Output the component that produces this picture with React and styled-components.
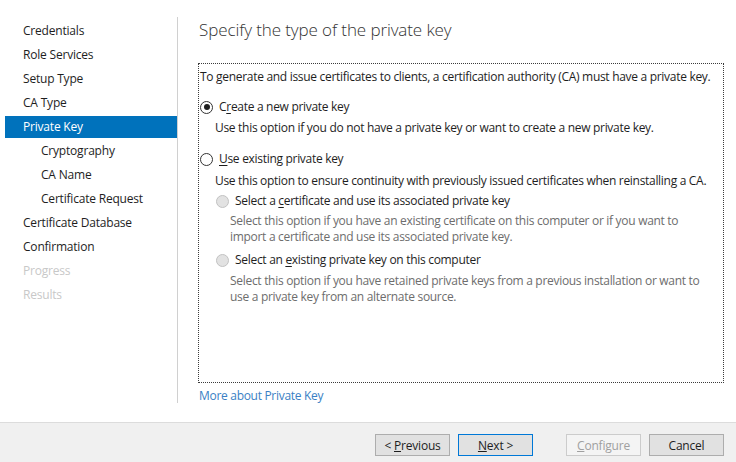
import React from 'react';
import styled, { createGlobalStyle } from 'styled-components';

const GlobalStyle = createGlobalStyle`
    html, body {
        margin: 0;
        padding: 0;
        background: #ffffff;
    }
    body {
        font-family: "Open Sans", "Noto Sans", "Liberation Sans", sans-serif;
        font-size: 12px;
        color: #1e1e1e;
    }
`;

const steps = [
    { label: 'Credentials' },
    { label: 'Role Services' },
    { label: 'Setup Type' },
    { label: 'CA Type' },
    { label: 'Private Key', active: true },
    { label: 'Cryptography', sub: true },
    { label: 'CA Name', sub: true },
    { label: 'Certificate Request', sub: true },
    { label: 'Certificate Database' },
    { label: 'Confirmation' },
    { label: 'Progress', disabled: true },
    { label: 'Results', disabled: true },
];

export default function App() {
    return (
        <Window>
            <GlobalStyle />
            <Main>
                <Sidebar>
                    <StepList>
                        {steps.map((s) => (
                            <Step key={s.label} $active={s.active} $sub={s.sub} $disabled={s.disabled}>
                                {s.label}
                            </Step>
                        ))}
                    </StepList>
                </Sidebar>
                <Content>
                    <Title>Specify the type of the private key</Title>
                    <Box>
                        <Line $mt={5}>To generate and issue certificates to clients, a certification authority (CA) must have a private key.</Line>

                        <Option $mt={14}>
                            <Radio $checked />
                            <span>C<u>r</u>eate a new private key</span>
                        </Option>
                        <Desc $mt={5} $indent={15}>Use this option if you do not have a private key or want to create a new private key.</Desc>

                        <Option $mt={15}>
                            <Radio />
                            <span><u>U</u>se existing private key</span>
                        </Option>
                        <Desc $mt={6} $indent={15}>Use this option to ensure continuity with previously issued certificates when reinstalling a CA.</Desc>

                        <Option $mt={4} $indent={16}>
                            <Radio $disabled />
                            <span>Select a <u>c</u>ertificate and use its associated private key</span>
                        </Option>
                        <Desc $mt={4} $indent={30} $muted>
                            Select this option if you have an existing certificate on this computer or if you want to<br />
                            import a certificate and use its associated private key.
                        </Desc>

                        <Option $mt={7} $indent={16}>
                            <Radio $disabled />
                            <span>Select an <u>e</u>xisting private key on this computer</span>
                        </Option>
                        <Desc $mt={5} $indent={30} $muted>
                            Select this option if you have retained private keys from a previous installation or want to<br />
                            use a private key from an alternate source.
                        </Desc>
                    </Box>
                    <MoreLink>More about Private Key</MoreLink>
                </Content>
            </Main>
            <Footer>
                <Button>&lt; <u>P</u>revious</Button>
                <Button $primary><u>N</u>ext &gt;</Button>
                <Button $disabled $gap={33}><u>C</u>onfigure</Button>
                <Button>Cancel</Button>
            </Footer>
        </Window>
    );
}

const Window = styled.div`
    width: 736px;
    height: 462px;
    display: flex;
    flex-direction: column;
    overflow: hidden;
`;

const Main = styled.div`
    flex: 1;
    display: flex;
    background: #ffffff;
`;

const Sidebar = styled.div`
    width: 172px;
    flex-shrink: 0;
    padding: 20px 0 0 5px;
    position: relative;

    &::after {
        content: '';
        position: absolute;
        right: -1px;
        top: 17px;
        height: 386px;
        width: 1px;
        background: #d0d0d0;
    }
`;

const StepList = styled.ul`
    list-style: none;
    margin: 0;
    padding: 0;
`;

const Step = styled.li`
    height: 22px;
    line-height: 22px;
    margin-bottom: 2px;
    padding-left: ${(p) => (p.$sub ? 36 : 18)}px;
    font-size: 12px;
    letter-spacing: -0.2px;
    color: ${(p) => (p.$active ? '#ffffff' : p.$disabled ? '#c8c8c8' : '#1e1e1e')};
    background: ${(p) => (p.$active ? '#0072bc' : 'transparent')};
`;

const Content = styled.div`
    flex: 1;
    padding: 17px 12px 0 22px;
    display: flex;
    flex-direction: column;
`;

const Title = styled.h1`
    margin: 0;
    font-size: 17px;
    font-weight: 300;
    line-height: 25px;
    color: #333333;
    letter-spacing: -0.1px;
`;

const Box = styled.div`
    margin-top: 21px;
    margin-left: -1px;
    height: 320px;
    box-sizing: border-box;
    border: 1px dotted #3c3c3c;
    padding: 0 0 0 1px;
    display: flex;
    flex-direction: column;
`;

const Line = styled.div`
    margin-top: ${(p) => p.$mt || 0}px;
    line-height: 16px;
    white-space: nowrap;
    letter-spacing: -0.3px;
`;

const Option = styled.div`
    margin-top: ${(p) => p.$mt || 0}px;
    padding-left: ${(p) => p.$indent || 0}px;
    display: flex;
    align-items: center;
    gap: 6px;
    line-height: 16px;
    white-space: nowrap;
    letter-spacing: -0.3px;

    u {
        text-underline-offset: 2px;
    }
`;

const Radio = styled.span`
    width: 11px;
    height: 11px;
    border-radius: 50%;
    border: 1px solid ${(p) => (p.$disabled ? '#c2c2c2' : '#333333')};
    background: ${(p) => (p.$disabled ? '#e2e2e2' : '#ffffff')};
    display: flex;
    align-items: center;
    justify-content: center;
    flex-shrink: 0;

    &::after {
        content: '';
        display: ${(p) => (p.$checked ? 'block' : 'none')};
        width: 6px;
        height: 6px;
        border-radius: 50%;
        background: #1e1e1e;
    }
`;

const Desc = styled.div`
    margin-top: ${(p) => p.$mt || 0}px;
    padding-left: ${(p) => p.$indent || 0}px;
    line-height: 16px;
    white-space: nowrap;
    letter-spacing: -0.3px;
    color: ${(p) => (p.$muted ? '#6d6d6d' : '#1e1e1e')};
`;

const MoreLink = styled.a`
    margin-top: 5px;
    line-height: 16px;
    color: #3a7fc4;
    letter-spacing: -0.3px;
    cursor: pointer;
`;

const Footer = styled.div`
    height: 40px;
    box-sizing: border-box;
    border-top: 1px solid #dcdcdc;
    background: #f0f0f0;
    display: flex;
    justify-content: flex-end;
    align-items: flex-start;
    padding: 11px 12px 0 0;
    gap: 8px;
`;

const Button = styled.button`
    width: 75px;
    height: 22px;
    margin-left: ${(p) => (p.$gap ? p.$gap - 8 : 0)}px;
    padding: 0;
    font-family: inherit;
    font-size: 12px;
    background: ${(p) => (p.$disabled ? '#f4f4f4' : '#e1e1e1')};
    color: ${(p) => (p.$disabled ? '#a0a0a0' : '#1e1e1e')};
    border: 1px solid ${(p) => (p.$primary ? '#0078d7' : p.$disabled ? '#cccccc' : '#adadad')};
    letter-spacing: -0.2px;
`;
